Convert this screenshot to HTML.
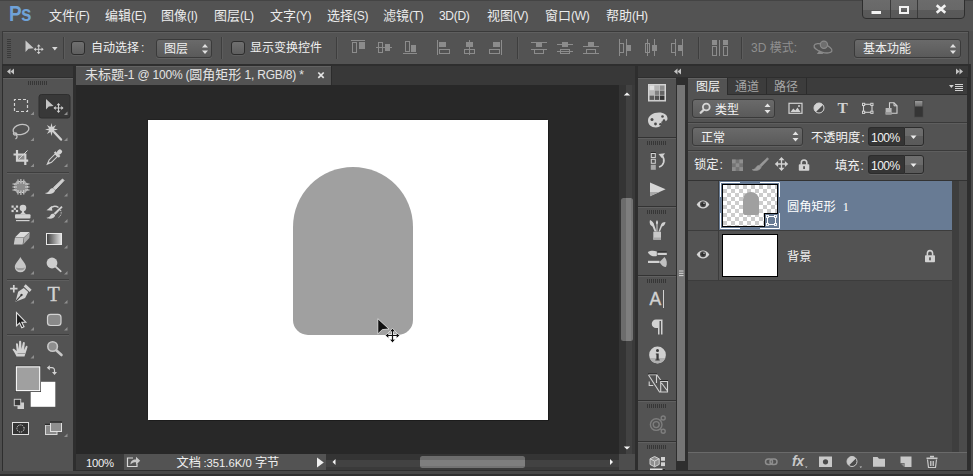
<!DOCTYPE html>
<html lang="zh-CN">
<head>
<meta charset="utf-8">
<title>Photoshop</title>
<style>
html,body{margin:0;padding:0;}
body{width:973px;height:476px;overflow:hidden;background:#4e4e4e;position:relative;
 font-family:"Liberation Sans","Noto Sans CJK SC",sans-serif;font-size:12px;color:#e6e6e6;}
.a{position:absolute;}
.t{position:absolute;white-space:nowrap;line-height:16px;}
svg{position:absolute;overflow:visible;}
/* menu */
#menubar{left:0;top:0;width:973px;height:31px;background:#535353;}
.mi{position:absolute;top:7px;font-size:13px;line-height:18px;color:#ececec;white-space:nowrap;}
.la{font-size:12px;letter-spacing:-0.3px;}
.lb{font-size:12px;letter-spacing:-0.2px;}
/* option bar */
#optbar{left:2px;top:31px;width:967px;height:34px;background:#535353;border:1px solid #3a3a3a;box-sizing:border-box;box-shadow:inset 0 1px 0 #5f5f5f;}
.sep{position:absolute;top:37px;width:1px;height:22px;background:#3e3e3e;box-shadow:1px 0 0 #5c5c5c;}
.chk{position:absolute;width:12px;height:12px;border:1px solid #2d2d2d;border-radius:3px;background:linear-gradient(#707070,#5e5e5e);box-shadow:0 1px 0 #5e5e5e;box-sizing:content-box;}
.inp{background:#353535;border:1px solid #2c2c2c;border-right:none;border-radius:3px 0 0 3px;box-sizing:border-box;box-shadow:0 1px 0 #606060}
.btn{background:linear-gradient(#6e6e6e 0,#6a6a6a 50%,#5c5c5c 50%,#5a5a5a 100%);border:1px solid #2c2c2c;border-radius:0 3px 3px 0;box-sizing:border-box;box-shadow:0 1px 0 #606060}
.dd{position:absolute;border:1px solid #3a3a3a;border-radius:3px;background:linear-gradient(#6a6a6a,#5a5a5a);box-sizing:border-box;box-shadow:0 1px 0 #606060;}
</style>
</head>
<body>
<!-- MENU BAR -->
<div id="menubar" class="a">
  <div class="a" style="left:0;top:0;width:973px;height:1px;background:#444"></div>
  <div class="t" style="left:9px;top:0px;font-size:22px;line-height:27px;font-weight:bold;color:#6fa2d8;transform:scaleX(0.86);transform-origin:0 0;letter-spacing:-0.6px">Ps</div>
  <div class="mi" style="left:49px">文件<span class="la">(F)</span></div>
  <div class="mi" style="left:105px">编辑<span class="la">(E)</span></div>
  <div class="mi" style="left:161px">图像<span class="la">(I)</span></div>
  <div class="mi" style="left:214px">图层<span class="la">(L)</span></div>
  <div class="mi" style="left:270px">文字<span class="la">(Y)</span></div>
  <div class="mi" style="left:327px">选择<span class="la">(S)</span></div>
  <div class="mi" style="left:383px">滤镜<span class="la">(T)</span></div>
  <div class="mi" style="left:439px"><span class="la">3D(D)</span></div>
  <div class="mi" style="left:487px">视图<span class="la">(V)</span></div>
  <div class="mi" style="left:545px">窗口<span class="la">(W)</span></div>
  <div class="mi" style="left:606px">帮助<span class="la">(H)</span></div>
</div>
<!-- window controls -->
<div class="a" style="left:862px;top:-3px;width:101px;height:20px;border:1px solid #2e2e2e;border-radius:0 0 4px 4px;background:linear-gradient(#6c6c6c 0,#686868 12.500px,#5a5a5a 12.500px,#585858 100%);box-sizing:content-box"></div>
<div class="a" style="left:890px;top:0;width:1px;height:18px;background:#3a3a3a"></div>
<div class="a" style="left:917px;top:0;width:1px;height:18px;background:#3a3a3a"></div>
<svg class="a" style="left:0;top:0" width="973" height="31" viewBox="0 0 973 31">
<rect x="871.500" y="11" width="9.500" height="3" fill="#f2f2f2"/>
<rect x="900" y="7" width="8" height="6" fill="none" stroke="#f2f2f2" stroke-width="2"/>
<path d="M936.700 5.300l8.600 7.400M945.300 5.300l-8.600 7.400" stroke="#f2f2f2" stroke-width="2.700"/>
</svg>
<!-- OPTIONS BAR -->
<div id="optbar" class="a"></div>

<svg class="a" style="left:0;top:0" width="973" height="70" viewBox="0 0 973 70" shape-rendering="crispEdges"><rect x="351" y="40" width="14" height="1" fill="#8c8c8c"/><rect x="352.5" y="42.5" width="4" height="10" fill="none" stroke="#8c8c8c" stroke-width="1"/><rect x="359" y="42" width="6" height="7" fill="#8c8c8c"/><rect x="376" y="47" width="16" height="1" fill="#8c8c8c"/><rect x="378.5" y="42.5" width="4" height="10" fill="none" stroke="#8c8c8c" stroke-width="1"/><rect x="385" y="44" width="5" height="7" fill="#8c8c8c"/><rect x="403" y="53" width="14" height="1" fill="#8c8c8c"/><rect x="405.5" y="41.5" width="4" height="10" fill="none" stroke="#8c8c8c" stroke-width="1"/><rect x="411" y="45" width="5" height="7" fill="#8c8c8c"/><rect x="437" y="40" width="1" height="15" fill="#8c8c8c"/><rect x="439" y="42" width="7" height="5" fill="#8c8c8c"/><rect x="439.5" y="49.5" width="10" height="4" fill="none" stroke="#8c8c8c" stroke-width="1"/><rect x="469" y="40" width="1" height="15" fill="#8c8c8c"/><rect x="466" y="42" width="7" height="5" fill="#8c8c8c"/><rect x="464.5" y="49.5" width="10" height="4" fill="none" stroke="#8c8c8c" stroke-width="1"/><rect x="501" y="40" width="1" height="15" fill="#8c8c8c"/><rect x="493" y="42" width="7" height="5" fill="#8c8c8c"/><rect x="489.5" y="49.5" width="10" height="4" fill="none" stroke="#8c8c8c" stroke-width="1"/><rect x="531" y="42" width="16" height="1" fill="#8c8c8c"/><rect x="531" y="49" width="16" height="1" fill="#8c8c8c"/><rect x="536" y="43" width="6" height="4" fill="#8c8c8c"/><rect x="534.5" y="49.5" width="9" height="4" fill="none" stroke="#8c8c8c" stroke-width="1"/><rect x="557" y="44" width="16" height="1" fill="#8c8c8c"/><rect x="557" y="51" width="16" height="1" fill="#8c8c8c"/><rect x="562" y="42" width="6" height="5" fill="#8c8c8c"/><rect x="560.5" y="49.5" width="9" height="4" fill="none" stroke="#8c8c8c" stroke-width="1"/><rect x="583" y="46" width="16" height="1" fill="#8c8c8c"/><rect x="583" y="53" width="16" height="1" fill="#8c8c8c"/><rect x="588" y="42" width="6" height="4" fill="#8c8c8c"/><rect x="586.5" y="49.5" width="9" height="4" fill="none" stroke="#8c8c8c" stroke-width="1"/><rect x="619" y="39" width="1" height="17" fill="#8c8c8c"/><rect x="626" y="39" width="1" height="17" fill="#8c8c8c"/><rect x="619.5" y="43.5" width="4" height="9" fill="none" stroke="#8c8c8c" stroke-width="1"/><rect x="627" y="45" width="4" height="6" fill="#8c8c8c"/><rect x="647" y="39" width="1" height="17" fill="#8c8c8c"/><rect x="654" y="39" width="1" height="17" fill="#8c8c8c"/><rect x="645.5" y="43.5" width="4" height="9" fill="none" stroke="#8c8c8c" stroke-width="1"/><rect x="652" y="45" width="5" height="6" fill="#8c8c8c"/><rect x="675" y="39" width="1" height="17" fill="#8c8c8c"/><rect x="682" y="39" width="1" height="17" fill="#8c8c8c"/><rect x="671.5" y="43.5" width="4" height="9" fill="none" stroke="#8c8c8c" stroke-width="1"/><rect x="678" y="45" width="4" height="6" fill="#8c8c8c"/><rect x="712" y="40" width="5" height="5" fill="#8c8c8c"/><rect x="712.5" y="46.5" width="4" height="9" fill="none" stroke="#8c8c8c" stroke-width="1"/><rect x="719" y="40" width="1" height="16" fill="#8c8c8c"/><rect x="723" y="40" width="5" height="5" fill="#8c8c8c"/><rect x="723.5" y="46.5" width="4" height="9" fill="none" stroke="#8c8c8c" stroke-width="1"/></svg>
<!-- options bar contents -->
<div class="a" style="left:7px;top:39px;width:4px;height:20px;background:repeating-linear-gradient(#3a3a3a 0 1px,transparent 1px 2px)"></div>
<svg class="a" style="left:24px;top:38px" width="36" height="18" viewBox="24 38 36 18">
  <path d="M25.500 40.500 L25.500 52 L28.500 48.800 L33.800 48.200 Z" fill="#c8c8c8"/>
  <path d="M38.700 45.500v7.600M34.900 49.300h7.600" stroke="#d0d0d0" stroke-width="1" fill="none"/>
  <path d="M38.700 44.300l-1.900 2.200h3.800zM38.700 54.300l-1.900-2.200h3.800zM33.700 49.300l2.200-1.900v3.800zM43.700 49.300l-2.200-1.900v3.800z" fill="#d0d0d0"/>
  <path d="M52 47h5.600l-2.800 3.400z" fill="#d8d8d8"/>
</svg>
<div class="sep" style="left:63px"></div>
<div class="chk" style="left:71px;top:41px"></div>
<div class="t" style="left:91px;top:40px;font-size:12px;line-height:17px;color:#f0f0f0">自动选择<span style="margin-left:2px">:</span></div>
<div class="dd" style="left:156px;top:39px;width:56px;height:19px"></div>
<div class="t" style="left:164px;top:41px;font-size:12px;line-height:17px;color:#f0f0f0">图层</div>
<svg class="a" style="left:201px;top:43px" width="8" height="12" viewBox="0 0 8 12"><path d="M1 4.5L4 1l3 3.500zM1 7.500L4 11l3-3.500z" fill="#e0e0e0"/></svg>
<div class="sep" style="left:221px"></div>
<div class="chk" style="left:231px;top:41px"></div>
<div class="t" style="left:250px;top:40px;font-size:12px;line-height:17px;color:#f0f0f0">显示变换控件</div>
<div class="sep" style="left:336px"></div>
<div class="sep" style="left:517px"></div>
<div class="sep" style="left:698px"></div>
<div class="sep" style="left:741px"></div>
<div class="t" style="left:751px;top:40px;font-size:12px;line-height:17px;color:#8f8f8f">3D 模式:</div>
<svg class="a" style="left:0;top:0" width="973" height="70" viewBox="0 0 973 70">
  <ellipse cx="823" cy="48.300" rx="9.300" ry="4" transform="rotate(17 823 48.300)" fill="none" stroke="#8a8a8a" stroke-width="1.300"/>
  <path d="M816.800 53.900h6.700l-3.800-3.600z" fill="#8a8a8a"/>
  <circle cx="823.900" cy="44.800" r="3.600" fill="#6e6e6e" stroke="#8a8a8a" stroke-width="1.200"/>
</svg>
<div class="dd" style="left:854px;top:39px;width:107px;height:19px"></div>
<div class="t" style="left:863px;top:41px;font-size:12px;line-height:17px;color:#f0f0f0">基本功能</div>
<svg class="a" style="left:949px;top:43px" width="8" height="12" viewBox="0 0 8 12"><path d="M1 4.5L4 1l3 3.500zM1 7.500L4 11l3-3.500z" fill="#e0e0e0"/></svg>
<!-- LEFT TOOL PANEL -->
<div class="a" style="left:2px;top:64px;width:969px;height:407px;background:#2e2e2e"></div>
<div class="a" style="left:0;top:471px;width:973px;height:3px;background:#484848"></div>
<div class="a" style="left:0;top:474px;width:973px;height:2px;background:#303030"></div>
<div class="a" id="lhead" style="left:3px;top:66px;width:70px;height:11px;background:#383838"></div>
<div class="a" id="lpanel" style="left:3px;top:78px;width:70px;height:393px;background:#535353;box-shadow:inset 0 1px 0 #626262"></div>
<svg class="a" id="toolsvg" style="left:0;top:0" width="76" height="476" viewBox="0 0 76 476"><g fill="#363636"><rect x="28" y="81" width="1" height="4"/><rect x="30" y="81" width="1" height="4"/><rect x="32" y="81" width="1" height="4"/><rect x="34" y="81" width="1" height="4"/><rect x="36" y="81" width="1" height="4"/><rect x="38" y="81" width="1" height="4"/><rect x="40" y="81" width="1" height="4"/><rect x="42" y="81" width="1" height="4"/><rect x="44" y="81" width="1" height="4"/><rect x="46" y="81" width="1" height="4"/></g>
<rect x="39" y="94.500" width="31" height="23.500" rx="2.500" fill="#383838" stroke="#2e2e2e"/>
<rect x="7" y="172" width="62" height="1" fill="#3e3e3e"/><rect x="7" y="173" width="62" height="1" fill="#5e5e5e"/>
<rect x="7" y="279" width="62" height="1" fill="#3e3e3e"/><rect x="7" y="280" width="62" height="1" fill="#5e5e5e"/>
<rect x="7" y="334" width="62" height="1" fill="#3e3e3e"/><rect x="7" y="335" width="62" height="1" fill="#5e5e5e"/>
<path d="M34 111.5V115H30.5z" fill="#8e8e8e"/>
<path d="M34 137.5V141H30.5z" fill="#8e8e8e"/>
<path d="M34 163.5V167H30.5z" fill="#8e8e8e"/>
<path d="M34 193.0V196.5H30.5z" fill="#8e8e8e"/>
<path d="M34 219.0V222.5H30.5z" fill="#8e8e8e"/>
<path d="M34 245.0V248.5H30.5z" fill="#8e8e8e"/>
<path d="M34 271.0V274.5H30.5z" fill="#8e8e8e"/>
<path d="M34 300.0V303.5H30.5z" fill="#8e8e8e"/>
<path d="M34 327.0V330.5H30.5z" fill="#8e8e8e"/>
<path d="M67.5 111.5V115H64.0z" fill="#8e8e8e"/>
<path d="M67.5 137.5V141H64.0z" fill="#8e8e8e"/>
<path d="M67.5 163.5V167H64.0z" fill="#8e8e8e"/>
<path d="M67.5 193.0V196.5H64.0z" fill="#8e8e8e"/>
<path d="M67.5 219.0V222.5H64.0z" fill="#8e8e8e"/>
<path d="M67.5 245.0V248.5H64.0z" fill="#8e8e8e"/>
<path d="M67.5 271.0V274.5H64.0z" fill="#8e8e8e"/>
<path d="M67.5 300.0V303.5H64.0z" fill="#8e8e8e"/>
<path d="M67.5 327.0V330.5H64.0z" fill="#8e8e8e"/>
<path d="M34 355.0V358.5H30.5z" fill="#8e8e8e"/>
<path d="M67.5 433.5V437H64.0z" fill="#8e8e8e"/>
<rect x="14.500" y="99.500" width="13" height="12" fill="none" stroke="#d2d2d2" stroke-width="1.200" stroke-dasharray="3 2" stroke-dashoffset="1.500"/>
<path d="M46 99 L46 109.500 L48.800 106.600 L53.600 106 Z" fill="#c4c4c4"/>
<path d="M58.500 104.200v7.600M54.700 108h7.600" stroke="#d2d2d2" stroke-width="1" fill="none"/><path d="M58.500 103l-1.900 2.200h3.800zM58.500 113l-1.900-2.200h3.800zM53.500 108l2.200-1.900v3.800zM63.500 108l-2.200-1.900v3.800z" fill="#d2d2d2"/>
<g fill="none" stroke="#c2c2c2" stroke-width="1.300"><ellipse cx="21" cy="129.500" rx="8" ry="5" transform="rotate(-12 21 129.500)"/><path d="M14 132.500c-1.500 1.500 0.500 3 2 2.200c1.500-1 0-2.500-1.200-1.500M16 134.500c1.500 1.500 1.500 3-0.500 4.500"/></g>
<polygon points="51.5 123.0 52.5 127.1 56.1 124.9 53.9 128.5 58.0 129.5 53.9 130.5 56.1 134.1 52.5 131.9 51.5 136.0 50.5 131.9 46.9 134.1 49.1 130.5 45.0 129.5 49.1 128.5 46.9 124.9 50.5 127.1" fill="#d2d2d2"/><path d="M54.500 132.500L61 139.500" stroke="#d2d2d2" stroke-width="2.400" stroke-linecap="round"/>
<rect x="18" y="155" width="6" height="6" fill="#8a8a8a"/><path d="M13.500 154.500H25.300V165M17 150V160.700H28.200" fill="none" stroke="#d2d2d2" stroke-width="2.200"/><path d="M18.500 159.500L27.500 150.500" stroke="#d2d2d2" stroke-width="1"/>
<g transform="rotate(45 54 157.500)"><rect x="51.800" y="147" width="4.400" height="5.500" rx="2" fill="#d2d2d2"/><rect x="50.500" y="152" width="7" height="2.200" fill="#d2d2d2"/><path d="M52.300 154.200h3.400v8.500l-1.700 4.300l-1.700-4.300z" fill="none" stroke="#d2d2d2" stroke-width="1.100"/><path d="M53.300 164l0.700 3l0.700-3z" fill="#d2d2d2"/></g>
<rect x="14.500" y="181.500" width="13" height="11" rx="4" fill="#8c8c8c"/><path d="M18 179.500v4.500M20.900 179v4.500M23.800 179.500v4.500M18 190v4.500M20.900 190.500v4.500M23.800 190v4.500M12.500 184h4.500M12.500 187h4.500M12.500 190h4.500M25 184h4.500M25 187h4.500M25 190h4.500" stroke="#d2d2d2" stroke-width="1.100"/><rect x="14.500" y="181.500" width="13" height="11" rx="4" fill="none" stroke="#d2d2d2" stroke-width="1" stroke-dasharray="1.500 1.400"/>
<g transform="translate(45 178.5) scale(1.0)"><path d="M17.500 0.500L19 2L10.500 11L8.500 9.200Z" fill="#d2d2d2" stroke="#d2d2d2" stroke-width="1"/><path d="M8.200 9.500l2 2c-0.500 2.500-3 4-6.200 4c-1.800 0-3.200-0.300-4-1c2.500-0.300 3.500-1.200 4.500-2.800c0.800-1.300 2.200-2.200 3.700-2.200z" fill="#d2d2d2"/></g>
<g fill="#d2d2d2"><rect x="11.500" y="205.500" width="2.200" height="2.200"/><rect x="15.900" y="205.500" width="2.200" height="2.200"/><rect x="13.700" y="207.700" width="2.200" height="2.200"/><rect x="11.500" y="209.900" width="2.200" height="2.200"/><rect x="15.900" y="209.900" width="2.200" height="2.200"/></g>
<circle cx="23" cy="208" r="3.300" fill="#d2d2d2"/><path d="M22 210.500h2l0.300 2.200l2.200 1.800h-7l2.200-1.800z" fill="#d2d2d2"/><rect x="15" y="214.300" width="15.500" height="4.200" rx="1" fill="#d2d2d2"/><rect x="16" y="220" width="13.500" height="1.200" fill="#d2d2d2"/>
<g transform="translate(46.5 205.5) scale(0.85)"><path d="M17.500 0.500L19 2L10.500 11L8.500 9.200Z" fill="#d2d2d2"/><path d="M8.200 9.500l2 2c-0.500 2.500-3 4-6.200 4c-1.800 0-3.200-0.300-4-1c2.500-0.300 3.500-1.200 4.500-2.800c0.800-1.300 2.200-2.200 3.700-2.200z" fill="#d2d2d2"/></g>
<path d="M49.500 209c2-2.800 6-3.600 9-1.500" fill="none" stroke="#d2d2d2" stroke-width="1.500"/><path d="M46.500 210.300l5.300-4.300l0.500 4.800z" fill="#d2d2d2"/><path d="M60.500 210c1.500 3 0.500 6-2.500 8" fill="none" stroke="#d2d2d2" stroke-width="1" stroke-dasharray="1.200 1.200"/>
<path d="M20.400 232H29.700L23.700 237.500H14.900Z" fill="#dcdcdc"/><path d="M14.900 238H23.600L22.600 244.600H13.800Z" fill="#c8c8c8"/><path d="M29.800 232.300L24.200 237.600L23.200 244.400L29.300 238Z" fill="#a8a8a8"/>
<defs><linearGradient id="gr"><stop offset="0" stop-color="#3c3c3c"/><stop offset="1" stop-color="#e4e4e4"/></linearGradient></defs>
<rect x="46.500" y="233.500" width="15" height="11" fill="url(#gr)" stroke="#e8e8e8" stroke-width="1"/>
<path d="M20.400 257C22 260.500 26 263.500 26 267a5.600 5.200 0 0 1 -11.200 0C14.800 263.500 18.800 260.500 20.400 257Z" fill="#c6c6c6"/><path d="M15.800 267.500a4.700 3.600 0 0 0 9.200 0a8 3 0 0 1 -9.200 0z" fill="#9c9c9c"/>
<circle cx="52" cy="263" r="5.400" fill="#cecece"/><path d="M55.500 266.500L60.800 271.300" stroke="#cecece" stroke-width="1.700" stroke-linecap="round"/>
<path d="M13.800 285v7.400M10.100 288.700h7.400" stroke="#d2d2d2" stroke-width="1.700"/>
<g transform="translate(-0.5 1) rotate(42 22 294)"><rect x="18" y="283.300" width="8" height="3" fill="#d2d2d2"/><path d="M19 287.300h6l1.700 6.500l-4.700 9.200l-4.700-9.200z" fill="#d2d2d2"/><path d="M22 302V294.500" stroke="#3c3c3c" stroke-width="1"/><circle cx="22" cy="294" r="1.200" fill="#3c3c3c"/></g>
<path d="M16.500 312.500V325.800L19.600 323L21.800 327.800L24 326.800L21.800 322.200H25.800Z" fill="#1e1e1e" stroke="#e0e0e0" stroke-width="1.100" stroke-linejoin="miter"/>
<rect x="47.500" y="314.300" width="13.500" height="11.200" rx="3" fill="#8a8a8a" stroke="#d2d2d2" stroke-width="1.200"/>
<path d="M16.500 356.500c-1-2.500-2.500-5-3.800-6.500c-0.500-1 0.700-1.800 1.700-1l2.300 2.300l-0.700-7c0-1.300 1.800-1.400 2 -0.100l0.900 5l0.200-7.400c0-1.400 2-1.400 2.100 0l0.300 7.300l1.300-6.200c0.300-1.300 2.100-1 2 0.300l-0.700 6.800l1.600-3.600c0.500-1.100 2-0.600 1.800 0.600c-0.600 3-2.200 6.500-3 9.500z" fill="#d2d2d2"/><path d="M17.500 353.500h7.500" stroke="#9a9a9a" stroke-width="1"/>
<circle cx="52.600" cy="346.500" r="4.800" fill="#8e8e8e" stroke="#c8c8c8" stroke-width="1.600"/><path d="M56.500 350.500L61.500 355" stroke="#c8c8c8" stroke-width="2.600" stroke-linecap="round"/>
<path d="M49.500 367.700h2.500a2.500 2.500 0 0 1 2.500 2.500v2.500" fill="none" stroke="#d2d2d2" stroke-width="1.200"/><path d="M46.800 367.700l3-2.500v5zM54.500 375l-2.500-3h5z" fill="#d2d2d2"/>
<rect x="30.700" y="381.800" width="24.600" height="25" fill="#fff"/>
<rect x="15" y="365.500" width="26" height="26.500" fill="#3a3a3a"/><rect x="15.800" y="366.300" width="24.500" height="24.900" fill="#fff"/><rect x="16.900" y="367.400" width="22.300" height="22.700" fill="#a0a0a0"/>
<rect x="17.500" y="402.500" width="6.500" height="6.500" fill="#d0d0d0"/><rect x="14.300" y="399.300" width="6.400" height="6.400" fill="#3a3a3a" stroke="#c8c8c8" stroke-width="1"/>
<rect x="12.500" y="422.500" width="16" height="12" fill="#333" stroke="#e0e0e0" stroke-width="1"/><circle cx="20.500" cy="428.500" r="3.600" fill="none" stroke="#f0f0f0" stroke-width="1" stroke-dasharray="1 1.050"/>
<rect x="45.500" y="425" width="11.500" height="9.500" fill="#8a8a8a" stroke="#d8d8d8" stroke-width="1"/><rect x="50.500" y="422.500" width="11" height="9" fill="#8e8e8e" stroke="#e0e0e0" stroke-width="1"/><rect x="50" y="421.300" width="12" height="1.600" fill="#2c2c2c"/><rect x="45" y="423.800" width="5" height="1.200" fill="#2c2c2c"/></svg>
<div class="t" style="left:47.500px;top:282px;font-family:'Liberation Serif',serif;font-size:20px;line-height:24px;color:#d2d2d2;-webkit-text-stroke:0.35px #d2d2d2">T</div>
<!-- DOCUMENT WINDOW -->
<div class="a" id="tabbar" style="left:76px;top:66px;width:559px;height:19px;background:#383838"></div>
<div class="a" id="tab" style="left:76px;top:66px;width:255px;height:19px;background:#535353;box-shadow:inset 0 1px 0 #626262,1px 0 0 #2c2c2c"></div>
<div class="t" style="left:85px;top:66px;font-size:13px;line-height:18px;color:#e4e4e4">未标题<span class="lb">-1 @ 100% (</span>圆角矩形<span class="lb"> 1, RGB/8) *</span></div>
<div class="a" id="canvasbg" style="left:76px;top:85px;width:543px;height:369px;background:#282828"></div>
<div class="a" id="paper" style="left:148px;top:120px;width:400px;height:300px;background:#fff;box-shadow:1px 1px 0 #1c1c1c,-1px -1px 0 #222"></div>
<div class="a" id="shape" style="left:293px;top:167px;width:120px;height:168px;background:#a0a0a0;border-radius:60px 60px 15px 15px"></div>
<!-- v scrollbar -->
<div class="a" id="vsb" style="left:619px;top:85px;width:16px;height:369px;background:linear-gradient(90deg,#343434 0,#343434 7px,#424242 7px,#424242 13px,#3a3a3a 13px)"></div>
<div class="a" id="vthumb" style="left:621px;top:198px;width:12px;height:143px;border-radius:2.500px;background:linear-gradient(90deg,#6c6c6c 0,#6c6c6c 5px,#7e7e7e 5px,#7e7e7e 10px,#727272 10px)"></div>
<!-- status bar -->
<div class="a" id="status" style="left:76px;top:454px;width:559px;height:16px;background:#535353"></div>
<div class="a" style="left:76px;top:454px;width:48px;height:16px;background:#3a3a3a"></div>
<div class="t" style="left:86px;top:455px;font-size:11.300px;line-height:16px;color:#f0f0f0;letter-spacing:-0.3px">100%</div>
<div class="t" style="left:176.500px;top:455px;font-size:12.200px;line-height:16px;color:#f0f0f0">文档<span style="font-size:11.300px;margin-left:2.500px">:351.6K/0 </span>字节</div>
<div class="a" id="hsb" style="left:326px;top:454px;width:293px;height:16px;background:linear-gradient(#343434 0,#343434 6px,#424242 6px,#424242 13px,#3a3a3a 13px)"></div>
<div class="a" id="hthumb" style="left:420px;top:456px;width:105px;height:12px;border-radius:2.500px;background:linear-gradient(#6c6c6c 0,#6c6c6c 4px,#7e7e7e 4px,#7e7e7e 10px,#727272 10px)"></div>
<div class="a" style="left:619px;top:454px;width:16px;height:16px;background:#4d4d4d"></div>
<svg class="a" id="docsvg" style="left:0;top:0" width="973" height="476" viewBox="0 0 973 476">
<path d="M318.300 72.500l5.400 5.400M323.700 72.500l-5.400 5.400" stroke="#e4e4e4" stroke-width="1.700"/>
<path d="M627 92.500l3.200 3h-6.400z" fill="#f4f4f4"/><path d="M627 449.500l3.200-3h-6.400z" fill="#f4f4f4"/>
<path d="M332.500 462l3-3v6z" fill="#f4f4f4"/><path d="M613 462l-3-3v6z" fill="#f4f4f4"/>
<path d="M317 457.500l6.800 5l-6.800 5z" fill="#f0f0f0"/>
<path d="M133 458h-5.500v8.500h9.500v-3" fill="none" stroke="#d8d8d8" stroke-width="1.200"/>
<path d="M130.500 464.500c0-3.500 2-5 5.500-5v-2.700l4.200 4l-4.200 4v-2.600c-2.500 0-4 0.500-5.500 2.300z" fill="#c8c8c8"/>
<!-- cursor -->
<path d="M377.800 318.700v15.200l4.500-4.300l6.700-0.600z" fill="#111" stroke="#e8e8e8" stroke-width="0.800" stroke-linejoin="round"/>
<path d="M392.500 330.500v10M387.500 335.500h10" stroke="#fff" stroke-width="2.600" fill="none"/>
<path d="M392.500 328.300l-3.100 3.400h6.200zM392.500 342.700l-3.100-3.400h6.200zM385.300 335.500l3.400-3.100v6.200zM399.700 335.500l-3.400-3.100v6.200z" fill="#111" stroke="#fff" stroke-width="0.700"/>
<path d="M392.500 330.500v10M387.500 335.500h10" stroke="#111" stroke-width="1.200" fill="none"/>
</svg>
<!-- RIGHT ICON STRIP -->
<div class="a" id="rhead" style="left:638px;top:66px;width:330px;height:11px;background:#383838"></div>
<div class="a" id="rstrip" style="left:638px;top:78px;width:38px;height:392px;background:#535353;box-shadow:inset 0 1px 0 #626262"></div>
<div class="a" id="rbar" style="left:677px;top:85px;width:8px;height:376px;background:#757575"></div>
<svg class="a" id="rsvg" style="left:0;top:0" width="973" height="476" viewBox="0 0 973 476"><rect x="638" y="137" width="38" height="1" fill="#333"/><rect x="638" y="138" width="38" height="1" fill="#606060"/>
<rect x="638" y="206" width="38" height="1" fill="#333"/><rect x="638" y="207" width="38" height="1" fill="#606060"/>
<rect x="638" y="275" width="38" height="1" fill="#333"/><rect x="638" y="276" width="38" height="1" fill="#606060"/>
<rect x="638" y="400" width="38" height="1" fill="#333"/><rect x="638" y="401" width="38" height="1" fill="#606060"/>
<rect x="638" y="441" width="38" height="1" fill="#333"/><rect x="638" y="442" width="38" height="1" fill="#606060"/>
<g fill="#363636"><rect x="647" y="141" width="1" height="4"/><rect x="649" y="141" width="1" height="4"/><rect x="651" y="141" width="1" height="4"/><rect x="653" y="141" width="1" height="4"/><rect x="655" y="141" width="1" height="4"/><rect x="657" y="141" width="1" height="4"/><rect x="659" y="141" width="1" height="4"/><rect x="661" y="141" width="1" height="4"/><rect x="663" y="141" width="1" height="4"/><rect x="665" y="141" width="1" height="4"/></g>
<g fill="#363636"><rect x="647" y="210" width="1" height="4"/><rect x="649" y="210" width="1" height="4"/><rect x="651" y="210" width="1" height="4"/><rect x="653" y="210" width="1" height="4"/><rect x="655" y="210" width="1" height="4"/><rect x="657" y="210" width="1" height="4"/><rect x="659" y="210" width="1" height="4"/><rect x="661" y="210" width="1" height="4"/><rect x="663" y="210" width="1" height="4"/><rect x="665" y="210" width="1" height="4"/></g>
<g fill="#363636"><rect x="647" y="279" width="1" height="4"/><rect x="649" y="279" width="1" height="4"/><rect x="651" y="279" width="1" height="4"/><rect x="653" y="279" width="1" height="4"/><rect x="655" y="279" width="1" height="4"/><rect x="657" y="279" width="1" height="4"/><rect x="659" y="279" width="1" height="4"/><rect x="661" y="279" width="1" height="4"/><rect x="663" y="279" width="1" height="4"/><rect x="665" y="279" width="1" height="4"/></g>
<g fill="#363636"><rect x="647" y="404" width="1" height="4"/><rect x="649" y="404" width="1" height="4"/><rect x="651" y="404" width="1" height="4"/><rect x="653" y="404" width="1" height="4"/><rect x="655" y="404" width="1" height="4"/><rect x="657" y="404" width="1" height="4"/><rect x="659" y="404" width="1" height="4"/><rect x="661" y="404" width="1" height="4"/><rect x="663" y="404" width="1" height="4"/><rect x="665" y="404" width="1" height="4"/></g>
<g fill="#363636"><rect x="647" y="445" width="1" height="4"/><rect x="649" y="445" width="1" height="4"/><rect x="651" y="445" width="1" height="4"/><rect x="653" y="445" width="1" height="4"/><rect x="655" y="445" width="1" height="4"/><rect x="657" y="445" width="1" height="4"/><rect x="659" y="445" width="1" height="4"/><rect x="661" y="445" width="1" height="4"/><rect x="663" y="445" width="1" height="4"/><rect x="665" y="445" width="1" height="4"/></g>
<rect x="648.500" y="84.500" width="17" height="16.500" fill="#c4c4c4" stroke="#d4d4d4" stroke-width="1"/>
<rect x="649.6" y="85.6" width="4.400" height="4.300" fill="#e0e0e0"/>
<rect x="654.8" y="85.6" width="4.400" height="4.300" fill="#b4b4b4"/>
<rect x="660.0" y="85.6" width="4.400" height="4.300" fill="#8c8c8c"/>
<rect x="649.6" y="90.6" width="4.400" height="4.300" fill="#b8b8b8"/>
<rect x="654.8" y="90.6" width="4.400" height="4.300" fill="#808080"/>
<rect x="660.0" y="90.6" width="4.400" height="4.300" fill="#646464"/>
<rect x="649.6" y="95.6" width="4.400" height="4.300" fill="#5c5c5c"/>
<rect x="654.8" y="95.6" width="4.400" height="4.300" fill="#505050"/>
<rect x="660.0" y="95.6" width="4.400" height="4.300" fill="#343434"/>
<path d="M648 120.500c0-4.500 5-8 11-8c5 0 8.500 2.500 8.500 6c0 2-1.500 3-3.500 2.600c-2-0.400-3 0.400-2.600 2c0.500 2-1.500 4.400-5.400 4.400c-5 0-8-3-8-7z" fill="#d2d2d2"/>
<circle cx="652" cy="119.5" r="1.5" fill="#4a4a4a"/>
<circle cx="655.5" cy="124" r="1.4" fill="#4a4a4a"/>
<circle cx="660.5" cy="124.2" r="1.3" fill="#4a4a4a"/>
<circle cx="664" cy="120.5" r="1.3" fill="#4a4a4a"/>
<circle cx="662.5" cy="116.5" r="1.3" fill="#4a4a4a"/>
<rect x="651.300" y="153.500" width="4" height="4" fill="none" stroke="#d2d2d2"/><rect x="651.300" y="159.300" width="4" height="4" fill="none" stroke="#d2d2d2"/><rect x="650.800" y="164.800" width="5" height="5" fill="#a8a8a8"/><rect x="650.800" y="152" width="5" height="1" fill="#2c2c2c"/>
<path d="M659 167c5-1.500 6.500-7 3-11.500" fill="none" stroke="#d2d2d2" stroke-width="1.700"/><path d="M658.500 154l6.500-0.800l-3.300 4.800z" fill="#d2d2d2"/>
<path d="M650 182.500L665.600 189.300L650 196.200Z" fill="#d6d6d6"/><path d="M650 192L659.500 192L650 196.200Z" fill="#a8a8a8"/>
<rect x="653.300" y="231.700" width="7.700" height="8" fill="#c8c8c8"/><rect x="653.300" y="237.500" width="7.700" height="2.200" fill="#a8a8a8"/>
<path d="M654.500 231.500l-2-5c-2-1-3.500-3-2.500-6.500c2.500 1 4 3 4.200 5l2.300 6.500zM656.500 231.500v-7c-0.800-1.500-0.800-3 0.500-4.500c1.300 1.500 1.300 3 0.500 4.500v7zM658.500 231.500l2.200-6c0.500-2.500 2.300-3.500 4.800-3.500c-0.300 2.500-1.500 4-3.500 4.500l-2 5z" fill="#d2d2d2"/>
<path d="M647.800 252c2.500-1.500 6-1.800 9-0.500v4.500c-4 1-7.500-0.500-9-4z" fill="#d2d2d2"/><rect x="657.500" y="252.800" width="9.300" height="2.200" fill="#d2d2d2"/><rect x="657.500" y="251.300" width="9.300" height="1" fill="#2c2c2c"/>
<rect x="648" y="260.800" width="11.500" height="2.200" fill="#d2d2d2"/><path d="M659.500 262l5-5c2.500 2.500 3 7 1.500 10c-2.500 0-5-2-6.500-5z" fill="#c0c0c0"/>
<rect x="679" y="270.500" width="4.500" height="1" fill="#d8d8d8"/><rect x="679" y="272.800" width="4.500" height="1" fill="#d8d8d8"/><rect x="679" y="275.100" width="4.500" height="1" fill="#d8d8d8"/>
<path d="M656 319.500h6.500v15h-1.500v-13.500h-1.500v13.500h-1.500v-6.500h-2a4.250 4.250 0 0 1 0-8.500z" fill="#d2d2d2"/>
<circle cx="657.500" cy="355" r="8.400" fill="#d0d0d0"/><path d="M649.700 358a8.400 8.400 0 0 0 15.600 0z" fill="#b0b0b0"/><circle cx="657.500" cy="350.500" r="1.500" fill="#3a3a3a"/><path d="M655.800 353.500h2.900v6h1v1h-4.400v-1h1.100v-5h-0.600z" fill="#3a3a3a"/>
<g fill="none" stroke="#d2d2d2" stroke-width="1.100"><path d="M648.500 374.700h8v8.300M649.200 381.500v4h4M648.500 375l11 17h8v-10.500h-6.800v10.500M656.800 374.700l4 5.500M661.500 383l6 8"/></g><rect x="648" y="373.300" width="9" height="1" fill="#2c2c2c"/><rect x="660" y="380" width="8" height="1" fill="#2c2c2c"/>
<g fill="none" stroke="#7e7e7e" stroke-width="1.400"><circle cx="656.200" cy="424.600" r="5.800"/><circle cx="656.200" cy="424.600" r="3"/><circle cx="663.200" cy="418" r="2"/><circle cx="663.200" cy="431.200" r="2"/><path d="M660.300 420.500l1.600-1.300M660.300 428.700l1.600 1.300"/></g>
<path d="M654.600 456.500l4.600 2.300v5.600l-4.600 2.400l-4.600-2.400v-5.600z" fill="#8e8e8e" stroke="#d2d2d2" stroke-width="1"/><path d="M650 458.800l4.600 2.300l4.600-2.300M654.600 461.100v5.500" fill="none" stroke="#d2d2d2" stroke-width="1"/><rect x="661" y="457" width="4" height="3.800" fill="#d2d2d2"/><rect x="661" y="462.300" width="4" height="3.800" fill="#d2d2d2"/><rect x="650" y="468.500" width="15" height="1.500" fill="#e0e0e0"/><rect x="662.500" y="468.500" width="2.500" height="1.500" fill="#2c2c2c"/></svg>
<div class="t" style="left:649.500px;top:289px;font-size:17.500px;line-height:20px;color:#d2d2d2;-webkit-text-stroke:0.4px #d2d2d2">A</div><div class="a" style="left:663px;top:290px;width:1px;height:18px;background:#d2d2d2"></div>
<!-- LAYERS PANEL -->
<div class="a" id="lp" style="left:688px;top:78px;width:279px;height:392px;background:#535353"></div>
<div class="a" id="lptabs" style="left:688px;top:78px;width:279px;height:16px;background:#3c3c3c;border-bottom:1px solid #2e2e2e"></div>
<div class="a" style="left:688px;top:78px;width:39px;height:17px;background:#535353;box-shadow:inset 0 1px 0 #626262"></div>
<div class="a" style="left:727px;top:78px;width:1px;height:16px;background:#2c2c2c"></div>
<div class="a" style="left:766px;top:78px;width:1px;height:16px;background:#2c2c2c"></div>
<div class="a" style="left:806px;top:78px;width:1px;height:16px;background:#2c2c2c"></div>
<div class="t" style="left:696px;top:79px;font-size:12px;color:#f2f2f2">图层</div>
<div class="t" style="left:735px;top:79px;font-size:12px;color:#a6a6a6">通道</div>
<div class="t" style="left:774px;top:79px;font-size:12px;color:#a6a6a6">路径</div>
<!-- filter row -->
<div class="dd" style="left:692px;top:99px;width:83px;height:19px"></div>
<div class="t" style="left:715px;top:102px;font-size:12px;color:#f2f2f2">类型</div>
<div class="a" style="left:688px;top:122px;width:279px;height:1px;background:#3a3a3a"></div>
<div class="a" style="left:688px;top:123px;width:279px;height:1px;background:#5e5e5e"></div>
<!-- blend row -->
<div class="dd" style="left:692px;top:127px;width:111px;height:19px"></div>
<div class="t" style="left:701px;top:130px;font-size:12px;color:#f2f2f2">正常</div>
<div class="t" style="left:811px;top:130px;font-size:12.300px;color:#f2f2f2">不透明度<span style="margin-left:1px">:</span></div>
<div class="a inp" style="left:868px;top:127px;width:36px;height:19px"></div>
<div class="a btn" style="left:904px;top:127px;width:20px;height:19px"></div>
<div class="t" style="left:871px;top:130px;font-size:12px;color:#f2f2f2;letter-spacing:-0.5px">100%</div>
<div class="a" style="left:688px;top:150px;width:279px;height:1px;background:#3a3a3a"></div>
<div class="a" style="left:688px;top:151px;width:279px;height:1px;background:#5e5e5e"></div>
<!-- lock row -->
<div class="t" style="left:694px;top:157px;font-size:12.300px;color:#f2f2f2">锁定<span style="margin-left:1px">:</span></div>
<div class="t" style="left:835px;top:158px;font-size:12.300px;color:#f2f2f2">填充<span style="margin-left:1px">:</span></div>
<div class="a inp" style="left:868px;top:155px;width:36px;height:19px"></div>
<div class="a btn" style="left:904px;top:155px;width:20px;height:19px"></div>
<div class="t" style="left:871px;top:158px;font-size:12px;color:#f2f2f2;letter-spacing:-0.5px">100%</div>
<!-- list -->
<div class="a" id="llist" style="left:688px;top:180px;width:279px;height:272px;background:#454545"></div>
<div class="a" style="left:688px;top:180px;width:279px;height:1px;background:#333"></div>
<div class="a" style="left:952px;top:181px;width:7px;height:271px;background:#3e3e3e"></div>
<div class="a" style="left:959px;top:181px;width:8px;height:271px;background:#4b4b4b"></div>
<div class="a" style="left:688px;top:181px;width:30px;height:49px;background:#535353"></div>
<div class="a" style="left:688px;top:231px;width:30px;height:49px;background:#535353"></div>
<div class="a" style="left:718px;top:181px;width:1px;height:99px;background:#3c3c3c"></div>
<div class="a" id="lsel" style="left:719px;top:181px;width:233px;height:49px;background:#687b94"></div>
<div class="a" style="left:719px;top:231px;width:233px;height:49px;background:#535353"></div>
<div class="a" style="left:688px;top:230px;width:264px;height:1px;background:#3c3c3c"></div>
<div class="a" style="left:688px;top:280px;width:264px;height:1px;background:#3c3c3c"></div>
<!-- thumb 1 -->
<div class="a" style="left:722px;top:184px;width:56px;height:43px;box-sizing:border-box;border:1px solid #000;background-color:#fff;background-image:linear-gradient(45deg,#ccc 25%,transparent 25%,transparent 75%,#ccc 75%),linear-gradient(45deg,#ccc 25%,transparent 25%,transparent 75%,#ccc 75%);background-size:8px 8px;background-position:0 0,4px 4px"></div>
<div class="a" style="left:742.500px;top:192px;width:16.500px;height:23px;background:#a0a0a0;border-radius:8.200px 8.200px 2px 2px"></div>
<div class="a" style="left:764px;top:213px;width:14px;height:14px;box-sizing:border-box;background:#687b94;border-left:1px solid #000;border-top:1px solid #000"></div>
<!-- thumb 2 -->
<div class="a" style="left:722px;top:234px;width:56px;height:43px;box-sizing:border-box;border:1px solid #000;background:#fff"></div>
<div class="t" style="left:787px;top:199px;font-size:12.200px;color:#fff">圆角矩形<span style="font-family:'Liberation Serif',serif;margin-left:7px">1</span></div>
<div class="t" style="left:787px;top:249px;font-size:12.200px;color:#f2f2f2">背景</div>
<div class="a" id="lbot" style="left:688px;top:452px;width:279px;height:18px;background:#535353;box-shadow:inset 0 1px 0 #6a6a6a"></div>
<svg class="a" id="lpsvg" style="left:0;top:0" width="973" height="476" viewBox="0 0 973 476"><path d="M949 85h4.800l-2.400 3z" fill="#d2d2d2"/><path d="M955 84.500h8M955 86.500h8M955 88.500h8M955 90.500h8" stroke="#d2d2d2" stroke-width="1"/>
<path d="M7 71.5l3.500-3v6z" fill="#c4c4c4"/>
<path d="M10.5 71.5l3.500-3v6z" fill="#c4c4c4"/>
<path d="M674 71.5l3.500-3v6z" fill="#c4c4c4"/>
<path d="M677.5 71.5l3.500-3v6z" fill="#c4c4c4"/>
<path d="M959.5 71.5l-3.500-3v6z" fill="#c4c4c4"/>
<path d="M963 71.5l-3.500-3v6z" fill="#c4c4c4"/>
<circle cx="706.300" cy="107" r="3.400" fill="#6c6c6c" stroke="#d6d6d6" stroke-width="1.800"/><path d="M703.500 110l-2.800 2.800" stroke="#d6d6d6" stroke-width="2.300" stroke-linecap="round"/>
<path d="M764.5 107l3-3.600l3 3.600zM764.5 110l3 3.600l3-3.600z" fill="#e4e4e4"/>
<path d="M792.5 135l3-3.600l3 3.600zM792.5 138l3 3.600l3-3.600z" fill="#e4e4e4"/>
<rect x="789" y="103.300" width="13" height="10" fill="none" stroke="#d2d2d2" stroke-width="1.200"/><path d="M790.500 112l2.800-3.500l2 2l2.200-3l3 4.500z" fill="#d2d2d2"/><circle cx="799" cy="106" r="1" fill="#d2d2d2"/>
<circle cx="819" cy="108" r="5" fill="#d2d2d2"/><path d="M822.900 104.900a5 5 0 0 1 -7 7z" fill="#4a4a4a"/><circle cx="819" cy="108" r="5" fill="none" stroke="#d2d2d2" stroke-width="1"/>
<g fill="none" stroke="#d2d2d2" stroke-width="1.100"><rect x="863.500" y="104.300" width="8.500" height="8"/></g><g fill="#535353" stroke="#d2d2d2" stroke-width="1"><rect x="862.500" y="103.300" width="2.200" height="2.200"/><rect x="870.800" y="103.300" width="2.200" height="2.200"/><rect x="862.500" y="111.200" width="2.200" height="2.200"/><rect x="870.800" y="111.200" width="2.200" height="2.200"/></g>
<path d="M889.500 102.800h4.500l3 3v7.500h-7.500z" fill="#535353" stroke="#d2d2d2" stroke-width="1.100"/><path d="M894 102.800v3h3" fill="none" stroke="#d2d2d2" stroke-width="1"/><rect x="885.600" y="108" width="6" height="6.500" fill="#b8b8b8"/><rect x="885.600" y="112" width="6" height="2.500" fill="#9a9a9a"/>
<defs><linearGradient id="tg" x1="0" y1="0" x2="0" y2="1"><stop offset="0" stop-color="#9a9a9a"/><stop offset="1" stop-color="#6a6a6a"/></linearGradient></defs><rect x="914.500" y="100.500" width="8.500" height="16.500" fill="#353535" stroke="#484848" stroke-width="0.600"/><rect x="915" y="101" width="7.500" height="5.500" fill="url(#tg)"/>
<path d="M910.500 135.5h6l-3 3.500z" fill="#ececec"/>
<path d="M910.500 163.5h6l-3 3.500z" fill="#ececec"/>
<rect x="732" y="159.500" width="11" height="11.500" fill="#747474"/><g fill="#8e8e8e"><rect x="732" y="159.500" width="3.700" height="3.800"/><rect x="739.300" y="159.500" width="3.700" height="3.800"/><rect x="735.700" y="163.300" width="3.600" height="3.800"/><rect x="732" y="167.100" width="3.700" height="3.900"/><rect x="739.300" y="167.100" width="3.700" height="3.900"/></g>
<g transform="translate(752.300 157.200) scale(0.86)" fill="#989898" stroke="#989898" stroke-width="0.700"><path d="M17.500 0.500L19 2L10.500 11L8.500 9.200Z"/><path d="M8.200 9.500l2 2c-0.500 2.500-3 4-6.200 4c-1.800 0-3.200-0.300-4-1c2.500-0.300 3.500-1.200 4.500-2.800c0.800-1.300 2.200-2.200 3.700-2.200z"/></g>
<path d="M781.500 158.500v11M776 164h11" stroke="#d2d2d2" stroke-width="1.300" fill="none"/><path d="M781.500 157l-3 3.300h6zM781.500 171l-3-3.300h6zM774.800 164l3.300-3v6zM788.200 164l-3.300-3v6z" fill="#d2d2d2"/>
<g transform="translate(798.8 158.7) scale(1.0)"><path d="M2.500 6V4a2.750 2.750 0 0 1 5.500 0V6" fill="none" stroke="#d2d2d2" stroke-width="1.600"/><rect x="0" y="5.500" width="10.500" height="6.500" rx="0.800" fill="#d2d2d2"/><rect x="4.500" y="7.500" width="1.500" height="2.800" fill="#3c3c3c"/></g>
<g transform="translate(925 249.2) scale(0.95 1.08)"><path d="M2.500 6V4a2.750 2.750 0 0 1 5.500 0V6" fill="none" stroke="#d2d2d2" stroke-width="1.600"/><rect x="0" y="5.500" width="10.500" height="6.500" rx="0.800" fill="#d2d2d2"/><rect x="4.500" y="7.500" width="1.500" height="2.800" fill="#3c3c3c"/></g>
<path d="M696.7 204.5c3-5.300 9.600-5.300 12.600 0c-3 5.300-9.600 5.300-12.600 0z" fill="#d6d6d6"/><circle cx="703" cy="204.2" r="3" fill="#484848"/><circle cx="703" cy="204.2" r="1.600" fill="#2a2a2a"/><circle cx="704" cy="203.2" r="0.800" fill="#bbb"/>
<path d="M696.7 254.5c3-5.300 9.600-5.300 12.600 0c-3 5.300-9.600 5.300-12.600 0z" fill="#d6d6d6"/><circle cx="703" cy="254.2" r="3" fill="#484848"/><circle cx="703" cy="254.2" r="1.600" fill="#2a2a2a"/><circle cx="704" cy="253.2" r="0.800" fill="#bbb"/>
<g fill="none" stroke="#fff" stroke-width="1"><path d="M720.500 197V182.500H740M760 182.500H779.500V197M720.500 213V228.500H740M760 228.500H779.500V213"/></g>
<g fill="none" stroke="#fff" stroke-width="1"><rect x="767.500" y="216.500" width="8" height="8"/></g><g fill="#687b94" stroke="#fff" stroke-width="0.900"><rect x="766.500" y="215.500" width="2" height="2"/><rect x="774.500" y="215.500" width="2" height="2"/><rect x="766.500" y="223.500" width="2" height="2"/><rect x="774.500" y="223.500" width="2" height="2"/></g>
<g fill="none" stroke="#8e8e8e" stroke-width="1.500"><rect x="765.500" y="459" width="7" height="5.500" rx="2.750"/><rect x="770" y="459" width="7" height="5.500" rx="2.750"/></g>
<path d="M805 466.500h2.600l-1.300 1.600zM859.500 466.500h2.600l-1.300 1.600z" fill="#c8c8c8"/>
<rect x="819" y="456.500" width="13" height="10.500" fill="#c8c8c8"/><circle cx="825.500" cy="461.800" r="2.600" fill="#4a4a4a"/>
<circle cx="852" cy="461.500" r="5" fill="#c8c8c8"/><path d="M855.900 458.400a5 5 0 0 1 -7 7z" fill="#4a4a4a"/><circle cx="852" cy="461.500" r="5" fill="none" stroke="#c8c8c8" stroke-width="1"/>
<path d="M873 457h4.500l1.500 1.800h6v8h-12z" fill="#c8c8c8"/>
<path d="M900.500 456.500h11v10.500h-7.200l-3.800-3.800z" fill="#c8c8c8"/><path d="M900 463l4.500 4.500v-4.500z" fill="#535353"/><path d="M901 463.500h3.500v3.500z" fill="#8e8e8e"/>
<g fill="none" stroke="#c8c8c8" stroke-width="1.200"><path d="M927.500 459.500l1 8h7l1-8"/><path d="M930.500 461v5M932 461v5M933.500 461v5" stroke-width="0.900"/></g><rect x="926.500" y="457.500" width="11" height="1.600" fill="#c8c8c8"/><rect x="930" y="455.800" width="4" height="1.700" fill="#c8c8c8"/></svg>
<div class="t" style="left:837.500px;top:98px;font-family:'Liberation Serif',serif;font-weight:bold;font-size:15.500px;line-height:20px;color:#d2d2d2">T</div>
<div class="t" style="left:792px;top:453px;font-style:italic;font-weight:bold;font-size:14px;line-height:16px;color:#c8c8c8;letter-spacing:-0.3px">fx</div>
</body>
</html>
